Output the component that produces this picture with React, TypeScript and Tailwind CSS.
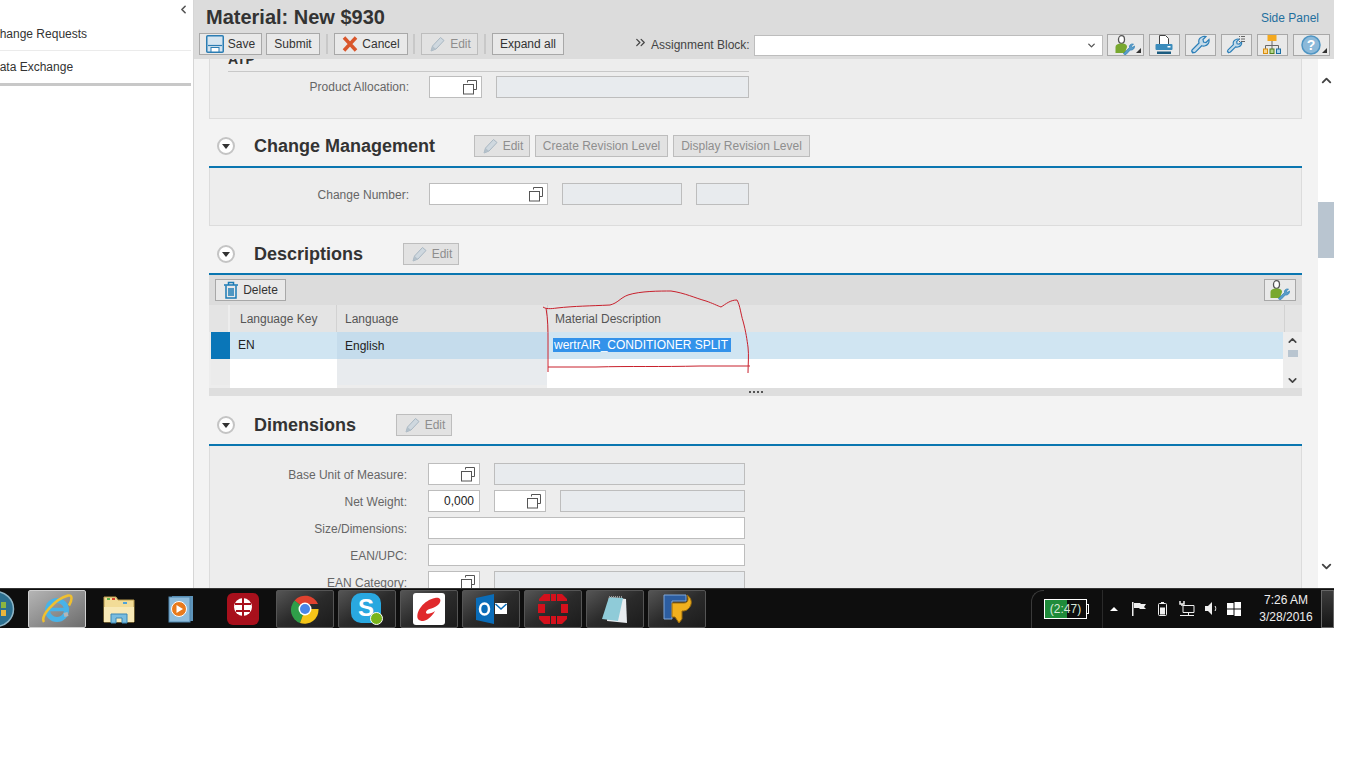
import React from 'react';
import { ChevronDown, ChevronLeft, ChevronUp, ChevronsRight } from 'lucide-react';

const Copy = () => (
  <svg width="16" height="16" viewBox="0 0 16 16" fill="none" stroke="#555" strokeWidth="1">
    <path d="M5.5 3.5V1.5H14.5V10.5H11.5" />
    <rect x="1.5" y="5.5" width="10" height="9.5" />
  </svg>
);

const Pencil = () => (
  <svg width="18" height="16" viewBox="0 0 18 16">
    <path d="M3 15l1.500-5L12.500 1.500l3.500 3L8 13z" fill="#cfd8df" stroke="#a9b7c2" />
    <path d="M3 15l1.500-5 3.500 3z" fill="#b3c0ca" />
  </svg>
);

const Save = () => (
  <svg width="18" height="18" viewBox="0 0 18 18">
    <rect x=".75" y=".75" width="16.500" height="16.500" rx="1" fill="#d5e5f0" stroke="#2b7db3" strokeWidth="1.500" />
    <path d="M2 10.500h14" stroke="#2b7db3" strokeWidth="1.200" />
    <rect x="5" y="12.500" width="8" height="4.500" fill="#fff" stroke="#2b7db3" />
  </svg>
);

const CancelX = () => (
  <svg width="16" height="16" viewBox="0 0 16 16">
    <path d="M2 1.500l12 13M14 1.500L2 14.500" stroke="#d9562b" strokeWidth="3.500" />
  </svg>
);

const Trash = () => (
  <svg width="16" height="18" viewBox="0 0 16 18" fill="none" stroke="#1b7bb5" strokeWidth="1.500">
    <path d="M1 4h14M5.500 4V1.500h5V4" />
    <path d="M3 4.500V17h10V4.500M6 7v8M8 7v8M10 7v8" />
  </svg>
);

const WRENCH = 'M2.500 17.500c-1-1-1-2 0-3l6.500-6.500c-.8-3 .8-5.500 4-6.500 1-.3 2-.3 3 0l-3 3 .5 2.500 2.500.5 3-3c.5 3-1 6-4.500 6.500-1 .2-2 .1-2.800-.2l-6 6c-1 1-2.200 1.200-3.200.2z';

const Wrench = () => (
  <svg width="20" height="20" viewBox="0 0 20 20">
    <path d={WRENCH} fill="#c4dbea" stroke="#2c7fb8" strokeWidth="1.200" />
  </svg>
);

const WrenchList = () => (
  <svg width="20" height="20" viewBox="0 0 20 20">
    <g transform="translate(0 3) scale(.82)">
      <path d={WRENCH} fill="#c4dbea" stroke="#2c7fb8" strokeWidth="1.400" />
    </g>
    <path d="M13 1.500h1M15 1.500h4M13 4h1M15 4h4M13 6.500h1M15 6.500h4" stroke="#666" strokeWidth="1" />
  </svg>
);

const PersonWrench = () => (
  <svg width="22" height="20" viewBox="0 0 22 20">
    <ellipse cx="7.500" cy="4.500" rx="3" ry="3.800" fill="#fff" stroke="#555" strokeWidth="1.300" />
    <path d="M1.500 18v-6c0-2 2-3.500 6-3.500s5.500 1.500 5.500 3.500l-2 6z" fill="#78a82f" />
    <path d="M9.500 18.500l6-6c-.5-2 1-4 4-3.500l-2 2 1 1.500 2-1.500c.3 2.800-2 4.500-4.200 4l-4.300 4.500c-1 .6-2.500-.2-2.500-1z" fill="#5a9cc8" stroke="#2c7fb8" strokeWidth=".7" />
  </svg>
);

const Printer = () => (
  <svg width="20" height="20" viewBox="0 0 20 20">
    <path d="M5.500 .5h6l3 3v6h-9z" fill="#fff" stroke="#444" />
    <rect x="1.500" y="9" width="17" height="6" rx="1" fill="#3b8cbc" />
    <rect x="13.500" y="11" width="3" height="1.500" fill="#fff" />
    <rect x="3" y="16.500" width="14" height="2.500" fill="#1c5c80" />
  </svg>
);

const Hierarchy = () => (
  <svg width="18" height="20" viewBox="0 0 18 20">
    <rect x="4.500" y="0" width="9" height="6" fill="#f4a91f" />
    <path d="M9 6v8M2.500 14v-3.500h13V14" stroke="#666" fill="none" />
    <rect x=".5" y="14" width="4" height="4.500" fill="#fbd489" stroke="#d88f10" />
    <rect x="7" y="14" width="4" height="4.500" fill="#b7d88c" stroke="#4f7d20" />
    <rect x="13.500" y="14" width="4" height="4.500" fill="#a9d0ea" stroke="#1c6ea3" />
  </svg>
);

const Help = () => (
  <svg width="20" height="20" viewBox="0 0 20 20">
    <circle cx="10" cy="10" r="9" fill="#8cb9d9" stroke="#4f95c3" strokeWidth="1.500" />
    <text x="10" y="15" textAnchor="middle" fontSize="14" fontWeight="700" fill="#fff" fontFamily="Liberation Sans">?</text>
  </svg>
);

const Corner = () => <span className="absolute right-[2px] bottom-[2px] w-0 h-0 border-l-[5px] border-l-transparent border-b-[5px] border-b-[#333]" />;

const IconBtn = ({ w, menu, children }: { w: string; menu?: boolean; children: React.ReactNode }) => (
  <button className={`relative ${w} h-[22px] border border-[#a8a8a8] bg-[#e9e9e9] flex items-center justify-center`}>
    {children}
    {menu && <Corner />}
  </button>
);

const Btn = ({ w, disabled, children }: { w: string; disabled?: boolean; children: React.ReactNode }) => (
  <button
    className={`${w} h-[22px] border flex items-center justify-center gap-[4px] text-xs ${
      disabled ? 'border-[#bdbdbd] bg-[#e2e2e2] text-[#8e8e8e]' : 'border-[#a8a8a8] bg-[#e9e9e9] text-[#333]'
    }`}
  >
    {children}
  </button>
);

const Sep = () => <div className="w-[2px] h-[20px] bg-[#c8c8c8]" />;

const Field = ({ w, white, value, copy }: { w: string; white?: boolean; value?: string; copy?: boolean }) => (
  <div
    className={`${w} h-[22px] shrink-0 border border-[#bdbdbd] flex items-center justify-end text-xs text-[#222] ${
      white ? 'bg-white' : 'bg-[#e8ebee]'
    } ${copy ? 'pr-[3px]' : 'pr-[5px]'}`}
  >
    {copy ? <Copy /> : value}
  </div>
);

const SectionHeader = ({ title, h, pb, children }: { title: string; h: string; pb: string; children: React.ReactNode }) => (
  <div className={`${h} ${pb} flex items-end border-b-2 border-[#0a76b0]`}>
    <div className="flex items-center h-[22px]">
      <div className="ml-[8px] w-[18px] h-[18px] rounded-full bg-white border-2 border-[#c4c4c4] flex items-center justify-center">
        <span className="w-0 h-0 border-x-[4px] border-x-transparent border-t-[5px] border-t-[#333]" />
      </div>
      <h2 className="ml-[19px] text-lg font-bold text-[#333] leading-[22px]">{title}</h2>
      {children}
    </div>
  </div>
);

const FormRow = ({ label, w, flush, children }: { label: string; w: string; flush?: boolean; children: React.ReactNode }) => (
  <div className="flex items-center">
    <div className={`${w} shrink-0 text-right text-xs text-[#666] ${flush ? '' : 'pt-[1px]'}`}>{label}</div>
    {children}
  </div>
);

const Scribble = () => (
  <svg className="absolute left-0 top-0 pointer-events-none" width="1366" height="588" fill="none" stroke="#c8202c" strokeWidth="1">
    <path d="M543 307C546 309 550 309 557 308C575 306 590 306 610 305C618 303 620 298 628 295C640 291 660 291 671 291C685 293 695 298 706 301C712 303 718 306 721 307C726 304 730 300 737 300C740 305 741 315 743 321C746 332 747 340 748 347C749 355 748 365 748 373" />
    <path d="M546 308C548 320 548 330 548 340L548 372" />
    <path d="M548 367L596 367C630 366 660 367 700 366L750 366" />
  </svg>
);

const Sidebar = () => (
  <aside className="w-[194px] shrink-0 h-full bg-white border-r border-[#d6d6d6] overflow-hidden">
    <div className="h-[18px] flex justify-end items-start pr-[3px] pt-[3px]">
      <ChevronLeft size={13} strokeWidth={3} className="text-[#555]" />
    </div>
    <div className="h-[33px] w-[200px] border-b border-[#ebebeb] flex items-center text-xs text-[#333] -ml-[9px]">Change Requests</div>
    <div className="h-[32px] w-[200px] flex items-center text-xs text-[#333] -ml-[9px]">Data Exchange</div>
    <div className="h-[3px] w-[191px] bg-[#c8c8c8]" />
  </aside>
);

const Header = () => (
  <header className="h-[59px] shrink-0 bg-[#dcdcdc] flex flex-col">
    <div className="h-[33px] flex items-center justify-between pl-[12px] pr-[15px]">
      <h1 className="text-[20px] font-bold text-[#333] leading-[28px]">Material: New $930</h1>
      <a className="text-xs text-[#1f6f9e] mt-[2px]">Side Panel</a>
    </div>
    <div className="flex items-center h-[22px] pl-[5px]">
      <Btn w="w-[63px]"><Save /> Save</Btn>
      <div className="w-[4px]" />
      <Btn w="w-[54px]">Submit</Btn>
      <div className="mx-[6px]"><Sep /></div>
      <Btn w="w-[74px]"><CancelX /> Cancel</Btn>
      <div className="ml-[5px] mr-[6px]"><Sep /></div>
      <Btn w="w-[57px]" disabled><Pencil /> Edit</Btn>
      <div className="mx-[6px]"><Sep /></div>
      <Btn w="w-[72px]">Expand all</Btn>
      <ChevronsRight size={15} strokeWidth={2} className="ml-[69px] -mt-[4px] text-[#444]" />
      <span className="ml-[3px] text-xs text-[#444] mt-[2px]">Assignment Block:</span>
      <div className="ml-[4px] w-[349px] h-[21px] border border-[#bdbdbd] bg-white flex items-center justify-end pr-[5px] mt-[2px]">
        <ChevronDown size={11} strokeWidth={3} className="text-[#555]" />
      </div>
      <div className="ml-[4px] flex gap-[5px] mt-[1px]">
        <IconBtn w="w-[37px]" menu><PersonWrench /></IconBtn>
        <IconBtn w="w-[31px]"><Printer /></IconBtn>
        <IconBtn w="w-[31px]"><Wrench /></IconBtn>
        <IconBtn w="w-[31px]"><WrenchList /></IconBtn>
        <IconBtn w="w-[31px]"><Hierarchy /></IconBtn>
        <IconBtn w="w-[37px]" menu><Help /></IconBtn>
      </div>
    </div>
  </header>
);

const DescriptionsTable = () => (
  <div className="h-[121px] bg-[#ededed] text-xs">
    <div className="h-[30px] bg-[#dcdcdc] flex items-center justify-between px-[6px]">
      <Btn w="w-[71px]"><Trash /> Delete</Btn>
      <IconBtn w="w-[32px]"><PersonWrench /></IconBtn>
    </div>
    <div className="h-[27px] flex bg-[#e4e4e4] text-[#555]">
      <div className="w-[21px] border-r-2 border-[#ededed]" />
      <div className="w-[107px] pl-[10px] flex items-center border-r border-[#d2d2d2]">Language Key</div>
      <div className="w-[210px] pl-[8px] flex items-center">Language</div>
      <div className="w-[737px] pl-[7px] flex items-center border-l border-[#d2d2d2]">Material Description</div>
      <div className="flex-1 border-l border-[#d2d2d2]" />
    </div>
    <div className="h-[56px] flex">
      <div className="w-[1074px]">
        <div className="h-[27px] flex text-[#222]">
          <div className="w-[2px]" />
          <div className="w-[19px] bg-[#0a76b8]" />
          <div className="w-[107px] pl-[8px] flex items-center bg-[#d0e5f2] pb-[2px]">EN</div>
          <div className="w-[210px] pl-[8px] flex items-center bg-[#c5dcec]">English</div>
          <div className="flex-1 pl-[6px] flex items-center bg-[#d0e5f2] pb-[2px]">
            <span className="bg-[#3392ea] text-white px-[1px] pr-[3px] leading-[14px]">wertrAIR_CONDITIONER SPLIT</span>
          </div>
        </div>
        <div className="h-[29px] flex">
          <div className="w-[2px]" />
          <div className="w-[19px] h-[26px] bg-[#ebebeb]" />
          <div className="w-[107px] bg-white" />
          <div className="w-[210px] h-[26px] bg-[#e8ebee]" />
          <div className="flex-1 bg-white" />
        </div>
      </div>
      <div className="flex-1 flex flex-col items-center pt-[2px] pb-[1px] text-[#444]">
        <ChevronUp size={13} strokeWidth={3} />
        <div className="w-[10px] h-[7px] bg-[#b9c5d0] mt-[3px]" />
        <div className="flex-1" />
        <ChevronDown size={13} strokeWidth={3} />
      </div>
    </div>
    <div className="h-[8px] bg-[#dedede] flex items-center justify-center">
      <div className="flex gap-[2px]">
        <span className="w-[2px] h-[2px] bg-[#555]" />
        <span className="w-[2px] h-[2px] bg-[#555]" />
        <span className="w-[2px] h-[2px] bg-[#555]" />
        <span className="w-[2px] h-[2px] bg-[#555]" />
      </div>
    </div>
  </div>
);

const Content = () => (
  <div className="flex-1 min-h-0 flex">
    <div className="w-[1124px] h-full bg-[#f3f3f3] pl-[15px] pr-[16px] overflow-hidden">
      <section className="h-[60px] bg-[#ededed] pl-[18px] border-x border-b border-[#dcdcdc]">
        <div className="h-[13px] w-[521px] overflow-hidden border-b border-[#c8c8c8]">
          <div className="-mt-[8px] font-bold text-sm text-[#333] leading-[16px]">ATP</div>
        </div>
        <div className="mt-[4px]">
          <FormRow label="Product Allocation:" w="w-[181px]" flush>
            <div className="w-[20px]" />
            <Field w="w-[53px]" white copy />
            <div className="w-[14px]" />
            <Field w="w-[253px]" />
          </FormRow>
        </div>
      </section>

      <SectionHeader title="Change Management" h="h-[49px]" pb="pb-[9px]">
        <div className="ml-[39px] flex gap-[5px]">
          <Btn w="w-[56px]" disabled><Pencil /> Edit</Btn>
          <Btn w="w-[133px]" disabled>Create Revision Level</Btn>
          <Btn w="w-[137px]" disabled>Display Revision Level</Btn>
        </div>
      </SectionHeader>
      <section className="h-[58px] bg-[#ededed] pt-[15px] pl-[18px] border-x border-b border-[#dcdcdc]">
        <FormRow label="Change Number:" w="w-[181px]">
          <div className="w-[20px]" />
          <Field w="w-[119px]" white copy />
          <div className="w-[14px]" />
          <Field w="w-[120px]" />
          <div className="w-[14px]" />
          <Field w="w-[53px]" />
        </FormRow>
      </section>

      <SectionHeader title="Descriptions" h="h-[49px]" pb="pb-[8px]">
        <div className="ml-[40px]"><Btn w="w-[56px]" disabled><Pencil /> Edit</Btn></div>
      </SectionHeader>
      <DescriptionsTable />

      <SectionHeader title="Dimensions" h="h-[50px]" pb="pb-[8px]">
        <div className="ml-[40px]"><Btn w="w-[56px]" disabled><Pencil /> Edit</Btn></div>
      </SectionHeader>
      <section className="bg-[#ededed] pt-[17px] pl-[18px] h-[160px] border-x border-[#dcdcdc] flex flex-col gap-[5px]">
        <FormRow label="Base Unit of Measure:" w="w-[179px]">
          <div className="w-[21px]" />
          <Field w="w-[52px]" white copy />
          <div className="w-[14px]" />
          <Field w="w-[251px]" />
        </FormRow>
        <FormRow label="Net Weight:" w="w-[179px]">
          <div className="w-[21px]" />
          <Field w="w-[52px]" white value="0,000" />
          <div className="w-[14px]" />
          <Field w="w-[52px]" white copy />
          <div className="w-[14px]" />
          <Field w="w-[185px]" />
        </FormRow>
        <FormRow label="Size/Dimensions:" w="w-[179px]">
          <div className="w-[21px]" />
          <Field w="w-[317px]" white />
        </FormRow>
        <FormRow label="EAN/UPC:" w="w-[179px]">
          <div className="w-[21px]" />
          <Field w="w-[317px]" white />
        </FormRow>
        <FormRow label="EAN Category:" w="w-[179px]">
          <div className="w-[21px]" />
          <Field w="w-[52px]" white copy />
          <div className="w-[14px]" />
          <Field w="w-[251px]" />
        </FormRow>
      </section>
    </div>
    <div className="w-[16px] h-full bg-white flex flex-col items-center text-[#444]">
      <ChevronUp size={15} strokeWidth={3} className="mt-[14px]" />
      <div className="w-full h-[56px] bg-[#b9c5d0] mt-[114px]" />
      <div className="flex-1" />
      <ChevronDown size={15} strokeWidth={3} className="mb-[14px]" />
    </div>
  </div>
);

const TaskItem = ({ boxed, active, children }: { boxed?: boolean; active?: boolean; children: React.ReactNode }) => (
  <div
    className={`w-[58px] h-[38px] shrink-0 flex items-center justify-center rounded-[2px] ${
      active
        ? 'border border-[#cfcfcf] bg-linear-to-br from-[#b5b5b5] to-[#6d6d6d]'
        : boxed
          ? 'border border-[#555] bg-linear-to-br from-[#555] via-[#2b2b2b] to-[#1c1c1c]'
          : ''
    }`}
  >
    {children}
  </div>
);

const Taskbar = () => (
  <footer className="w-[1334px] h-[40px] shrink-0 bg-[#0e0e0e] border-t border-[#333] flex items-center text-white relative">
    <div className="w-[28px] h-[38px] overflow-hidden shrink-0 flex items-center">
      <svg width="28" height="38" viewBox="0 0 28 38">
        <circle cx="-4" cy="19" r="17.500" fill="#2c6f8f" stroke="#8fb5c6" strokeWidth="1.500" />
        <rect x="1" y="12" width="5" height="6" fill="#8cb53f" />
        <rect x="1" y="20" width="5" height="6" fill="#e8b53c" />
      </svg>
    </div>
    <div className="flex gap-[4px]">
      <TaskItem active>
        <svg width="34" height="34" viewBox="0 0 34 34" fill="none">
          <circle cx="17" cy="18" r="9.500" stroke="#49b3e8" strokeWidth="5" />
          <path d="M8 17.500h19" stroke="#49b3e8" strokeWidth="3.500" />
          <path d="M24 23l4-1" stroke="#b5b5b5" strokeWidth="4" />
          <path d="M4 30C0 24 15 7 28 3.500c5-1 4 5 1 10" stroke="#f0c030" strokeWidth="2.500" />
        </svg>
      </TaskItem>
      <TaskItem>
        <svg width="32" height="32" viewBox="0 0 32 32">
          <path d="M1 4h12l2 3h16v22H1z" fill="#f2dc97" stroke="#b99b4c" />
          <rect x="4" y="5" width="3" height="2" fill="#5bb04a" />
          <rect x="9" y="5" width="3" height="2" fill="#d8402e" />
          <rect x="20" y="9" width="4" height="2" fill="#4fa3d8" />
          <path d="M1 14h30v15H1z" fill="#f8e9b6" />
          <path d="M8 30v-9h16v9h-5v-5h-6v5z" fill="#79bde0" stroke="#3a87b5" />
        </svg>
      </TaskItem>
      <TaskItem>
        <svg width="26" height="28" viewBox="0 0 26 28">
          <rect x="4" y="1" width="21" height="25" fill="#5e94ba" />
          <rect x="1" y="2" width="21" height="25" fill="#8ebcdc" stroke="#4f86ad" />
          <circle cx="11" cy="14" r="7.500" fill="#e87a1c" stroke="#fff" strokeWidth="1" />
          <path d="M8.500 10v8l6.500-4z" fill="#fff" />
        </svg>
      </TaskItem>
      <TaskItem>
        <svg width="32" height="32" viewBox="0 0 32 32">
          <rect width="32" height="32" rx="6" fill="#a8101c" />
          <circle cx="16" cy="14" r="9" fill="#fff" />
          <path d="M8 11h16M9 18h14M16 5v18M5 24c6 2 16 3 23-2" stroke="#a8101c" strokeWidth="2" fill="none" />
        </svg>
      </TaskItem>
      <TaskItem boxed>
        <svg width="30" height="30" viewBox="0 0 30 30">
          <path d="M15 15L4.600 6.500A14 14 0 0 1 28 10H15z" fill="#e0422f" />
          <path d="M15 15L10 29A14 14 0 0 1 4.600 6.500z" fill="#2f9e49" />
          <path d="M15 15h13.500A14 14 0 0 1 10 29z" fill="#f5c518" />
          <circle cx="15" cy="15" r="6.500" fill="#fff" />
          <circle cx="15" cy="15" r="5" fill="#4a86e8" />
        </svg>
      </TaskItem>
      <TaskItem boxed>
        <div className="relative w-[32px] h-[32px]">
          <div className="w-[30px] h-[30px] rounded-[10px] bg-[#29a8e0] flex items-center justify-center text-[24px] font-bold leading-none text-white">S</div>
          <div className="absolute right-0 bottom-0 w-[13px] h-[13px] rounded-full bg-[#7ab51d] border border-white" />
        </div>
      </TaskItem>
      <TaskItem boxed>
        <svg width="32" height="32" viewBox="0 0 32 32" fill="none">
          <rect width="32" height="32" rx="3" fill="#fff" />
          <path d="M5 26C2 19 11 7 22 5c5-1 7 2 4 6-4 5-12 4-13 8-.5 3 5 2 9-1-3 6-9 10-12 10-2 0-4-.5-5-2z" fill="#e0292b" />
        </svg>
      </TaskItem>
      <TaskItem boxed>
        <svg width="32" height="30" viewBox="0 0 32 30">
          <path d="M1 4L19 0v30L1 26z" fill="#0a6cb8" />
          <ellipse cx="9.500" cy="15" rx="4.500" ry="5.500" fill="none" stroke="#fff" strokeWidth="2.500" />
          <rect x="20" y="9" width="12" height="11" fill="#fff" />
          <path d="M20.500 10l5.500 5 5.500-5" stroke="#0a6cb8" strokeWidth="1.500" fill="none" />
        </svg>
      </TaskItem>
      <TaskItem boxed>
        <svg width="34" height="30" viewBox="0 0 34 30" fill="#d4111c">
          <path d="M8 0h6v7H3V5z" />
          <rect x="15" y="0" width="5" height="7" />
          <path d="M21 0h5l5 5v2H21z" />
          <rect x="2" y="10" width="7" height="9" />
          <rect x="25" y="10" width="7" height="9" />
          <path d="M3 22h11v8H8l-5-5z" />
          <rect x="15" y="22" width="5" height="8" />
          <path d="M21 22h10v3l-5 5h-5z" />
        </svg>
      </TaskItem>
      <TaskItem boxed>
        <svg width="30" height="30" viewBox="0 0 30 30">
          <path d="M9 3l17 2 1 24-20-2z" fill="#e8ecef" />
          <path d="M9 3l14 1L18 27 2 25z" fill="#8fcbd8" />
          <path d="M9 3h14" stroke="#999" strokeWidth="2" strokeDasharray="1 1" />
        </svg>
      </TaskItem>
      <TaskItem boxed>
        <svg width="34" height="32" viewBox="0 0 34 32">
          <path d="M4 2h22v6H12v18H4z" fill="#2c5da0" stroke="#7ea7d8" />
          <path d="M12 10h12c4 0 5-4 3-8 5 3 6 10 1 14-2 2-4 2-6 2v8l-3 4-4-6h-3z" fill="#f0b01e" stroke="#9a6b0c" />
        </svg>
      </TaskItem>
    </div>
    <div className="flex-1" />
    <div className="w-[13px] h-[38px] border-l border-t border-[#3a3a3a] rounded-tl-[12px] shrink-0" />
    <div className="w-[43px] h-[20px] border border-white flex text-xs shrink-0 relative mr-[3px]">
      <div className="w-[22px] bg-[#1f8b3a]" />
      <span className="absolute inset-0 flex items-center justify-center text-[#d8e8d8]">(2:47)</span>
      <span className="absolute -right-[3px] top-[4px] w-[3px] h-[10px] border border-l-0 border-white" />
    </div>
    <div className="w-[13px] h-[38px] border-r border-[#2a2a2a] shrink-0" />
    <div className="ml-[7px] w-0 h-0 border-x-[4px] border-x-transparent border-b-[4px] border-b-white shrink-0" />
    <svg className="ml-[13px] shrink-0" width="15" height="14" viewBox="0 0 15 14" fill="#eee">
      <rect x="1" y="0" width="1.500" height="14" />
      <path d="M3 1h6l1 1h5l-2 3 2 2H9L8 6H3z" />
    </svg>
    <svg className="ml-[12px] shrink-0" width="9" height="14" viewBox="0 0 9 14" fill="none" stroke="#eee">
      <rect x=".5" y="1.500" width="8" height="12" rx="1" />
      <rect x="2.500" y="6" width="4" height="6" fill="#eee" />
      <path d="M3 .5h3" />
    </svg>
    <svg className="ml-[12px] shrink-0" width="16" height="15" viewBox="0 0 16 15" fill="none" stroke="#eee">
      <path d="M4 4.500h11v7H4zM9.500 11.500v2.500M1 14.500h14" />
      <path d="M1 0v3h4V0M3 3v2" strokeWidth="1.500" />
    </svg>
    <svg className="ml-[10px] shrink-0" width="14" height="13" viewBox="0 0 14 13" fill="#eee">
      <path d="M0 4h3l4-4v13L3 9H0z" />
      <path d="M10 4c1 1 1 4 0 5" stroke="#eee" fill="none" />
    </svg>
    <svg className="ml-[8px] shrink-0" width="14" height="14" viewBox="0 0 14 14" fill="#fff">
      <rect x="0" y="1" width="6.500" height="5.500" />
      <rect x="7.500" y="0" width="6.500" height="6.500" />
      <rect x="0" y="7.500" width="6.500" height="5.500" />
      <rect x="7.500" y="7.500" width="6.500" height="6.500" />
    </svg>
    <div className="w-[54px] ml-[18px] shrink-0 text-xs text-center leading-[17px] text-[#eee]">
      <div>7:26 AM</div>
      <div>3/28/2016</div>
    </div>
    <div className="ml-[8px] w-[13px] h-[38px] shrink-0 border border-[#666] bg-linear-to-b from-[#3c3c3c] to-[#161616]" />
  </footer>
);

export default function App() {
  return (
    <div className="relative w-[1366px] h-[768px] bg-white overflow-hidden font-['Liberation_Sans',Arial,sans-serif]">
      <div className="flex w-[1334px] h-[588px]">
        <Sidebar />
        <main className="flex-1 min-w-0 h-full flex flex-col">
          <Header />
          <Content />
        </main>
      </div>
      <Taskbar />
      <Scribble />
    </div>
  );
}
